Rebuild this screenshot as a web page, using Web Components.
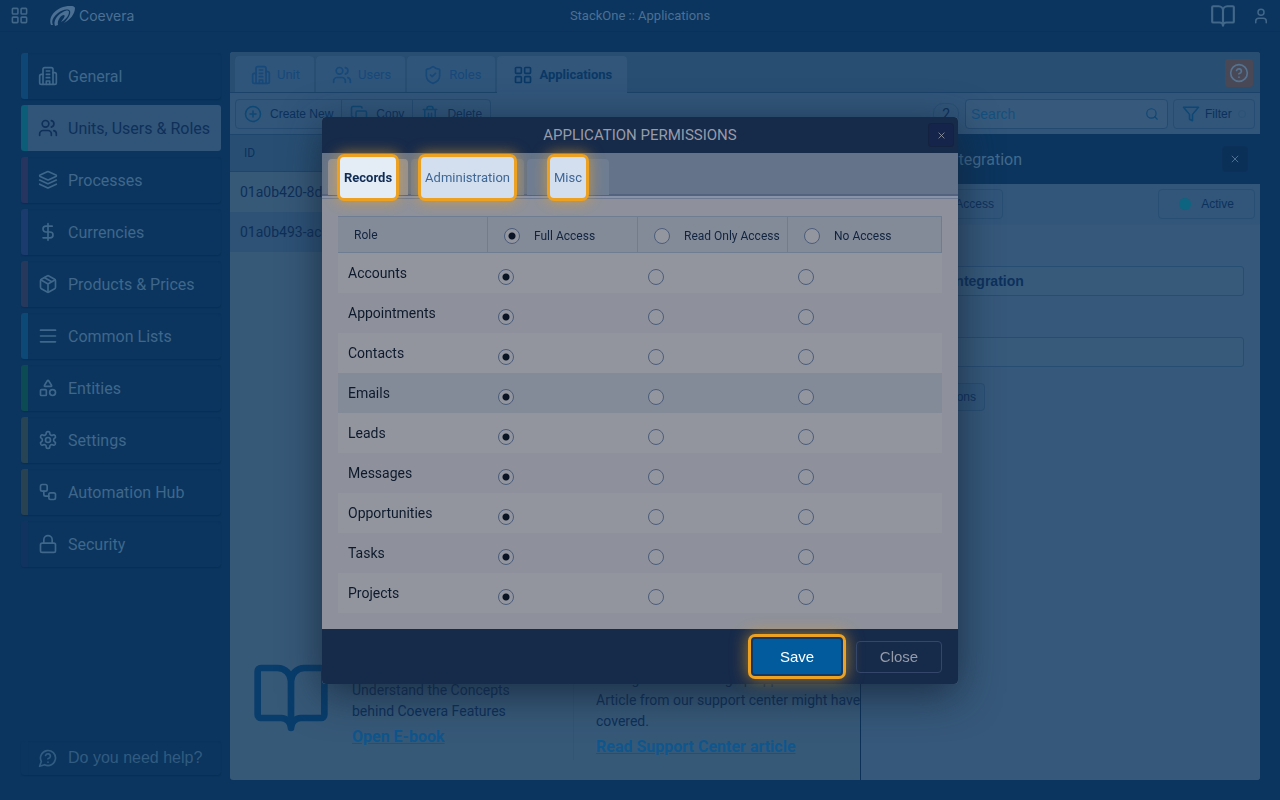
<!DOCTYPE html>
<html lang="en">
<head>
<meta charset="utf-8">
<title>StackOne :: Applications</title>
<style>
  html, body { height: 100%; margin: 0; }
  body {
    background: #0b355e;
    color: #0d2f58;
    font-family: Roboto, "Liberation Sans", sans-serif;
    font-size: 14px;
    overflow: hidden;
  }
</style>
</head>
<body>
<coevera-app></coevera-app>
<permissions-dialog heading="APPLICATION PERMISSIONS"></permissions-dialog>

<script>
const ICONS = {
  grid: '<rect x="3" y="3" width="7" height="7" rx="1"/><rect x="14" y="3" width="7" height="7" rx="1"/><rect x="14" y="14" width="7" height="7" rx="1"/><rect x="3" y="14" width="7" height="7" rx="1"/>',
  building: '<path d="M6 22V4a2 2 0 0 1 2-2h8a2 2 0 0 1 2 2v18Z"/><path d="M6 10H4a2 2 0 0 0-2 2v8a2 2 0 0 0 2 2h2M18 8h2a2 2 0 0 1 2 2v10a2 2 0 0 1-2 2h-2"/><path d="M10 6h4M10 10h4M10 14h4M10 22v-4h4v4"/>',
  users: '<path d="M16 21v-2a4 4 0 0 0-4-4H6a4 4 0 0 0-4 4v2"/><circle cx="9" cy="7" r="4"/><path d="M22 21v-2a4 4 0 0 0-3-3.900M16 3.100a4 4 0 0 1 0 7.800"/>',
  layers: '<path d="m12.800 2.200a2 2 0 0 0-1.700 0L2.600 6.100a1 1 0 0 0 0 1.800l8.600 3.900a2 2 0 0 0 1.700 0l8.600-3.900a1 1 0 0 0 0-1.800Z"/><path d="m22 12-9.200 4.200a2 2 0 0 1-1.700 0L2 12"/><path d="m22 17-9.200 4.200a2 2 0 0 1-1.700 0L2 17"/>',
  dollar: '<path d="M12 2v20M17 5H9.500a3.500 3.500 0 0 0 0 7h5a3.500 3.500 0 0 1 0 7H6"/>',
  box: '<path d="M11 21.700a2 2 0 0 0 2 0l7-4a2 2 0 0 0 1-1.700V8a2 2 0 0 0-1-1.700l-7-4a2 2 0 0 0-2 0l-7 4A2 2 0 0 0 3 8v8a2 2 0 0 0 1 1.700Z"/><path d="M12 22V12M3.300 7 12 12l8.700-5M7.500 4.300l9 5.100"/>',
  list: '<path d="M3 5h18M3 12h18M3 19h18"/>',
  shapes: '<path d="M8.300 10a.7.7 0 0 1-.6-1.100L11.400 3a.7.7 0 0 1 1.200 0l3.700 5.900a.7.7 0 0 1-.6 1.100Z"/><rect x="3" y="14" width="7" height="7" rx="1"/><circle cx="17.500" cy="17.500" r="3.500"/>',
  settings: '<path d="M12.200 2h-.4a2 2 0 0 0-2 2v.2a2 2 0 0 1-1 1.700l-.4.300a2 2 0 0 1-2 0l-.2-.1a2 2 0 0 0-2.700.7l-.2.400a2 2 0 0 0 .7 2.700l.2.100a2 2 0 0 1 1 1.700v.5a2 2 0 0 1-1 1.800l-.2.100a2 2 0 0 0-.7 2.700l.2.400a2 2 0 0 0 2.700.7l.2-.1a2 2 0 0 1 2 0l.4.300a2 2 0 0 1 1 1.700v.2a2 2 0 0 0 2 2h.4a2 2 0 0 0 2-2v-.2a2 2 0 0 1 1-1.700l.4-.3a2 2 0 0 1 2 0l.2.100a2 2 0 0 0 2.700-.7l.2-.4a2 2 0 0 0-.7-2.700l-.2-.1a2 2 0 0 1-1-1.800v-.5a2 2 0 0 1 1-1.700l.2-.1a2 2 0 0 0 .7-2.700l-.2-.4a2 2 0 0 0-2.700-.7l-.2.100a2 2 0 0 1-2 0l-.4-.3a2 2 0 0 1-1-1.700V4a2 2 0 0 0-2-2z"/><circle cx="12" cy="12" r="3"/>',
  flow: '<rect x="3" y="3" width="8" height="8" rx="2"/><path d="M7 11v4a2 2 0 0 0 2 2h4"/><rect x="13" y="13" width="8" height="8" rx="2"/>',
  lock: '<rect x="3" y="11" width="18" height="11" rx="2"/><path d="M7 11V7a5 5 0 0 1 10 0v4"/>',
  help: '<path d="M7.900 20A9 9 0 1 0 4 16.100L2 22Z"/><path d="M9.100 9a3 3 0 0 1 5.800 1c0 2-3 3-3 3M12 17h.01"/>',
  question: '<circle cx="12" cy="12" r="10"/><path d="M9.100 9a3 3 0 0 1 5.800 1c0 2-3 3-3 3M12 17h.01"/>',
  book: '<path d="M12 7v14M3 18a1 1 0 0 1-1-1V4a1 1 0 0 1 1-1h5a4 4 0 0 1 4 4 4 4 0 0 1 4-4h5a1 1 0 0 1 1 1v13a1 1 0 0 1-1 1h-6a3 3 0 0 0-3 3 3 3 0 0 0-3-3z"/>',
  user: '<circle cx="12" cy="7" r="4"/><path d="M19 21v-2a4 4 0 0 0-4-4H9a4 4 0 0 0-4 4v2"/>',
  shield: '<path d="M20 13c0 5-3.500 7.500-7.700 9a1 1 0 0 1-.6 0C7.500 20.500 4 18 4 13V6a1 1 0 0 1 1-1c2 0 4.500-1.200 6.200-2.700a1.200 1.200 0 0 1 1.600 0C14.500 3.800 17 5 19 5a1 1 0 0 1 1 1z"/><path d="m9 12 2 2 4-4"/>',
  plus: '<circle cx="12" cy="12" r="10"/><path d="M8 12h8M12 8v8"/>',
  copy: '<rect x="8" y="8" width="14" height="14" rx="2"/><path d="M4 16a2 2 0 0 1-2-2V4a2 2 0 0 1 2-2h10a2 2 0 0 1 2 2"/>',
  trash: '<path d="M3 6h18M19 6v14a2 2 0 0 1-2 2H7a2 2 0 0 1-2-2V6M8 6V4a2 2 0 0 1 2-2h4a2 2 0 0 1 2 2v2M10 11v6M14 11v6"/>',
  search: '<circle cx="11" cy="11" r="8"/><path d="m21 21-4.300-4.300"/>',
  filter: '<path d="M22 3H2l8 9.500V19l4 2v-8.500z"/>',
  close: '<path d="M5 5l14 14M19 5 5 19"/>'
};

class AppIcon extends HTMLElement {
  connectedCallback() {
    const size = this.getAttribute('size') || 20;
    this.attachShadow({mode: 'open'}).innerHTML = `
      <style>
        :host { display: inline-flex; flex: none; }
        svg { display: block; fill: none; stroke: currentColor; stroke-width: 2; stroke-linecap: round; stroke-linejoin: round; }
      </style>
      <svg width="${size}" height="${size}" viewBox="0 0 24 24" aria-hidden="true">${ICONS[this.getAttribute('name')]}</svg>
    `;
  }
}

class TopBar extends HTMLElement {
  constructor() {
    super();
    this.attachShadow({mode: 'open'}).innerHTML = `
      <style>
        :host {
          display: grid;
          grid-template-columns: 1fr auto 1fr;
          align-items: center;
          height: 31px;
          border-bottom: 1px solid #0b3158;
          color: #416789;
        }
        .left { display: flex; align-items: center; padding-left: 10px; gap: 21px; }
        .right { display: flex; align-items: center; justify-content: flex-end; gap: 16px; padding-right: 10px; }
        button { display: flex; padding: 0; border: 0; background: none; color: inherit; }
        .brand { display: flex; align-items: center; gap: 4px; color: #4b7094; font: 14px Inter, sans-serif; text-decoration: none; }
        .title { font-size: 13px; color: #4b7094; }
      </style>
      <div class="left">
        <button aria-label="Apps"><app-icon name="grid" size="19"></app-icon></button>
        <a class="brand" href="#">
          <svg width="25" height="20" viewBox="0 0 25 20" fill="currentColor" aria-hidden="true">
            <path d="M1 19C-2 12 4 4 13 1 18-.5 24-1 25 2 25 8 20 14 14 17 18 13 21 8 20 5 18 2 12 4 8 7 3 11 1 15 3 19Z"/>
            <path d="M5 20C3 15 7 9 13 6 16 4 19 4 19 6 19 10 15 14 11 16 13 13 16 10 14 9 11 9 7 14 8 19Z"/>
          </svg>
          <span>Coevera</span>
        </a>
      </div>
      <div class="title">StackOne :: Applications</div>
      <div class="right">
        <button aria-label="Guide"><app-icon name="book" size="26"></app-icon></button>
        <button aria-label="Account"><app-icon name="user" size="18"></app-icon></button>
      </div>
    `;
  }
}

class NavItem extends HTMLElement {
  connectedCallback() {
    const bar = this.getAttribute('bar') || 'transparent';
    this.attachShadow({mode: 'open'}).innerHTML = `
      <style>
        :host { display: block; }
        a {
          display: flex;
          align-items: center;
          gap: 10px;
          box-sizing: border-box;
          height: 46px;
          padding-left: 10px;
          border-left: 7px solid ${bar};
          border-radius: 3px;
          box-shadow: 0 1px 1px #092e55, inset 0 1px 1px #0a325a;
          color: #3f678b;
          font-size: 16px;
          white-space: nowrap;
          text-decoration: none;
        }
        :host([active]) a { background: #315579; color: #0e3059; box-shadow: none; }
        :host([compact]) a { height: 34px; font-family: "Liberation Sans", sans-serif; color: #315b80; }
      </style>
      <a href="#"><app-icon name="${this.getAttribute('icon')}"></app-icon><span><slot></slot></span></a>
    `;
  }
}

class SideNav extends HTMLElement {
  constructor() {
    super();
    this.attachShadow({mode: 'open'}).innerHTML = `
      <style>
        :host { display: flex; flex-direction: column; justify-content: space-between; box-sizing: border-box; width: 200px; padding: 1px 0 5px; }
        nav { display: flex; flex-direction: column; gap: 6px; }
      </style>
      <nav>
        <nav-item icon="building" bar="#0e4676">General</nav-item>
        <nav-item icon="users" bar="#0c5d77" active>Units, Users &amp; Roles</nav-item>
        <nav-item icon="layers" bar="#25355f">Processes</nav-item>
        <nav-item icon="dollar" bar="#1b3a6e">Currencies</nav-item>
        <nav-item icon="box" bar="#27385d">Products &amp; Prices</nav-item>
        <nav-item icon="list" bar="#0c4976">Common Lists</nav-item>
        <nav-item icon="shapes" bar="#0d4b54">Entities</nav-item>
        <nav-item icon="settings" bar="#264454">Settings</nav-item>
        <nav-item icon="flow" bar="#294251">Automation Hub</nav-item>
        <nav-item icon="lock" bar="#10345f">Security</nav-item>
      </nav>
      <nav-item icon="help" compact>Do you need help?</nav-item>
    `;
  }
}

class UnitTabs extends HTMLElement {
  constructor() {
    super();
    this.attachShadow({mode: 'open'}).innerHTML = `
      <style>
        :host {
          display: flex;
          justify-content: space-between;
          height: 41px;
          padding: 0 7px 0 5px;
          background: #284e72;
          box-shadow: inset 0 -1px #1b4369;
        }
        .tabs { display: flex; align-items: flex-end; gap: 1px; }
        .tabs button {
          display: flex;
          align-items: center;
          gap: 6px;
          height: 37px;
          padding: 0 15px 0 16px;
          border: 0;
          border-radius: 4px 4px 0 0;
          background: #2f557a;
          box-shadow: inset 0 -1px #1b4369, inset -1px 0 #284e72;
          color: #16487a;
          font: 13px Roboto, sans-serif;
        }
        .tabs .active { background: #31567a; box-shadow: none; color: #0a3866; font-weight: 700; }
        .help {
          display: flex;
          align-self: center;
          padding: 4px;
          border: 0;
          border-radius: 3px;
          background: #494856;
          color: #557390;
        }
      </style>
      <div class="tabs" role="tablist">
        <button role="tab"><app-icon name="building"></app-icon>Unit</button>
        <button role="tab"><app-icon name="users"></app-icon>Users</button>
        <button role="tab"><app-icon name="shield"></app-icon>Roles</button>
        <button role="tab" class="active" aria-selected="true"><app-icon name="grid"></app-icon>Applications</button>
      </div>
      <button class="help" aria-label="Help"><app-icon name="question"></app-icon></button>
    `;
  }
}

class UnitToolbar extends HTMLElement {
  constructor() {
    super();
    this.attachShadow({mode: 'open'}).innerHTML = `
      <style>
        :host {
          display: flex;
          align-items: center;
          justify-content: space-between;
          box-sizing: border-box;
          height: 41px;
          padding: 0 5px;
          background: #31567a;
        }
        button { font: 12px "Liberation Sans", sans-serif; color: #0c315d; background: none; }
        app-icon { color: #0d4775; }
        .actions, .find { display: flex; align-items: center; }
        .actions { border: 1px solid #244b71; border-radius: 4px; }
        .actions button {
          display: flex;
          align-items: center;
          gap: 8px;
          height: 28px;
          padding: 0 8px;
          border: 0;
          border-right: 1px solid #244b71;
        }
        .actions button:last-child { border-right: 0; }
        .count {
          padding: 2px 8px;
          margin-right: 6px;
          border: 1px solid #284f75;
          border-radius: 10px;
          font-size: 14px;
        }
        .search {
          display: flex;
          align-items: center;
          box-sizing: border-box;
          width: 203px;
          height: 30px;
          padding: 0 8px 0 5px;
          margin-right: 5px;
          border: 1px solid #234b71;
          border-radius: 4px;
          background: #375a7c;
        }
        input { flex: 1; min-width: 0; padding: 0; border: 0; background: none; color: #0c315d; font: 14px "Liberation Sans", sans-serif; }
        input::placeholder { color: #14507e; opacity: 1; }
        .filter { display: flex; align-items: center; gap: 5px; height: 30px; width: 82px; padding: 0 8px; border: 1px solid #254c72; border-radius: 4px; }
        .filter i { width: 6px; height: 6px; margin-left: auto; border: 1px solid #2c5277; border-radius: 50%; }
      </style>
      <div class="actions">
        <button><app-icon name="plus" size="18"></app-icon>Create New</button>
        <button><app-icon name="copy" size="18"></app-icon>Copy</button>
        <button><app-icon name="trash" size="18"></app-icon>Delete</button>
      </div>
      <div class="find">
        <span class="count">2</span>
        <label class="search"><input type="text" placeholder="Search" aria-label="Search"><app-icon name="search" size="14"></app-icon></label>
        <button class="filter"><app-icon name="filter" size="18"></app-icon>Filter<i></i></button>
      </div>
    `;
  }
}

class ApplicationList extends HTMLElement {
  constructor() {
    super();
    this.attachShadow({mode: 'open'}).innerHTML = `
      <style>
        :host { display: flex; flex-direction: column; justify-content: space-between; min-width: 0; overflow: hidden; border-right: 1px solid #0b3158; }
        table { width: 100%; border-collapse: collapse; text-align: left; }
        th { height: 36px; padding: 0 14px; border: 1px solid #1d466c; border-width: 1px 0; background: #284f73; color: #0c315d; font-size: 12px; font-weight: 400; }
        td { height: 40px; padding: 0 10px; }
        tr:last-child td { background: #2d5276; }
        .promos { display: flex; box-sizing: border-box; height: 150px; padding: 0 0 20px 21px; line-height: 21px; }
        .promo { display: flex; flex: none; box-sizing: border-box; gap: 21px; }
        .promo app-icon { color: #083d6c; }
        .text { display: flex; flex-direction: column; align-items: flex-start; white-space: nowrap; }
        .book { width: 323px; padding-top: 28px; border-right: 1px solid #30557a; }
        .book .text { padding-top: 22px; }
        .article { padding: 39px 0 0 22px; }
        a { margin-top: 4px; color: #0f568d; font-size: 16px; font-weight: 700; }
      </style>
      <table>
        <thead><tr><th>ID</th></tr></thead>
        <tbody>
          <tr><td>01a0b420-8d</td></tr>
          <tr><td>01a0b493-ac</td></tr>
        </tbody>
      </table>
      <div class="promos">
        <div class="promo book">
          <app-icon name="book" size="80"></app-icon>
          <div class="text"><span>Understand the Concepts</span><span>behind Coevera Features</span><a href="#">Open E-book</a></div>
        </div>
        <div class="promo article">
          <div class="text"><span>Having trouble setting up application? An</span><span>Article from our support center might have</span><span>covered.</span><a href="#">Read Support Center article</a></div>
        </div>
      </div>
    `;
  }
}

class ApplicationDetails extends HTMLElement {
  constructor() {
    super();
    this.attachShadow({mode: 'open'}).innerHTML = `
      <style>
        :host { display: block; background: #36587a; }
        header { display: flex; align-items: center; justify-content: space-between; height: 50px; padding: 0 12px; background: #0b355e; color: #426a8d; font-size: 16px; }
        button { font: 12px "Liberation Sans", sans-serif; color: #0c315d; background: #31567a; border: 1px solid #284e73; border-radius: 4px; height: 30px; padding: 0 8px; }
        header button { display: flex; align-items: center; justify-content: center; width: 26px; height: 26px; padding: 0; border-color: #0b3159; background: #0a3058; color: #5c7e9d; }
        .bar { display: flex; justify-content: space-between; padding: 5px 5px 5px 12px; border-bottom: 1px solid #335679; background: #31567a; }
        .bar button:first-child { width: 130px; text-align: right; }
        .state { display: flex; align-items: center; justify-content: center; gap: 10px; width: 97px; }
        .state i { width: 12px; height: 12px; border-radius: 50%; background: #0c6480; }
        form { display: flex; flex-direction: column; align-items: flex-start; padding: 41px 16px 0 12px; }
        input { box-sizing: border-box; width: 100%; height: 30px; margin: 0 0 41px; padding: 0 9px; border: 1px solid #264d72; border-radius: 3px; background: #375a7b; color: #0c315d; font: 700 14px "Liberation Sans", sans-serif; }
        input + input { margin-bottom: 16px; }
        form button { width: 112px; height: 28px; text-align: right; }
      </style>
      <header><span>StackOne Integration</span><button aria-label="Close details"><app-icon name="close" size="10"></app-icon></button></header>
      <div class="bar"><button>Access</button><button class="state"><i></i>Active</button></div>
      <form>
        <input type="text" value="StackOne Integration" aria-label="Name">
        <input type="text" aria-label="Description">
        <button type="button">Permissions</button>
      </form>
    `;
  }
}

class CoeveraApp extends HTMLElement {
  constructor() {
    super();
    this.attachShadow({mode: 'open'}).innerHTML = `
      <style>
        :host { display: flex; flex-direction: column; height: 100vh; }
        main { flex: 1; display: flex; gap: 9px; padding: 20px 20px 20px 21px; min-height: 0; }
        .panel { flex: 1; min-width: 0; display: flex; flex-direction: column; overflow: hidden; border-radius: 3px; background: #375978; }
        .split { flex: 1; min-height: 0; display: grid; grid-template-columns: minmax(0, 631fr) minmax(0, 399fr); }
      </style>
      <top-bar></top-bar>
      <main>
        <side-nav></side-nav>
        <div class="panel">
          <unit-tabs></unit-tabs>
          <unit-toolbar></unit-toolbar>
          <div class="split">
            <application-list></application-list>
            <application-details></application-details>
          </div>
        </div>
      </main>
    `;
  }
}

class PermissionsTable extends HTMLElement {
  constructor() {
    super();
    const levels = ['Full Access', 'Read Only Access', 'No Access'];
    const roles = ['Accounts', 'Appointments', 'Contacts', 'Emails', 'Leads', 'Messages', 'Opportunities', 'Tasks', 'Projects'];
    this.attachShadow({mode: 'open'}).innerHTML = `
      <style>
        :host { display: block; }
        table { width: 100%; table-layout: fixed; border-collapse: separate; border-spacing: 0; text-align: left; color: #0d1a2c; }
        col { width: 150px; }
        col:last-child { width: auto; }
        th, td { box-sizing: border-box; font-weight: 400; }
        thead th {
          height: 37px;
          padding: 0 0 0 16px;
          border: 1px solid #6f7d93;
          border-left-width: 0;
          background: #848b98;
          color: #10233f;
          font-size: 12px;
          white-space: nowrap;
        }
        thead label { display: flex; align-items: center; gap: 14px; padding-top: 3px; }
        tbody th { height: 40px; padding: 0 10px; font-size: 14px; }
        td { padding: 8px 0 0 10px; }
        tbody tr:nth-child(odd) { background: #93959e; }
        tbody tr.hover { background: #848b98; }
        input {
          appearance: none;
          display: block;
          flex: none;
          box-sizing: border-box;
          width: 16px;
          height: 16px;
          margin: 0;
          border: 1px solid #4b5d7b;
          border-radius: 50%;
          background: #94969f;
        }
        input:checked { background: radial-gradient(circle, #0a1424 3px, #94969f 4px); }
      </style>
      <table>
        <colgroup><col><col><col><col></colgroup>
        <thead>
          <tr>
            <th>Role</th>
            ${levels.map((level, i) => `<th><label><input type="radio" name="all" ${i ? '' : 'checked'}>${level}</label></th>`).join('')}
          </tr>
        </thead>
        <tbody>
          ${roles.map(role => `
            <tr class="${role === 'Emails' ? 'hover' : ''}">
              <th scope="row">${role}</th>
              ${levels.map((level, i) => `<td><input type="radio" name="${role}" aria-label="${role}: ${level}" ${i ? '' : 'checked'}></td>`).join('')}
            </tr>`).join('')}
        </tbody>
      </table>
    `;
  }
}

class PermissionsDialog extends HTMLElement {
  connectedCallback() {
    this.attachShadow({mode: 'open'}).innerHTML = `
      <style>
        :host { position: fixed; inset: 0; display: flex; align-items: center; justify-content: center; padding-top: 1px; }
        .dialog { width: 636px; border-radius: 4px; background: #8e919b; box-shadow: 0 10px 40px rgba(20, 35, 55, .8); }
        header, footer { background: #162a4a; }
        header {
          display: grid;
          grid-template-columns: 26px 1fr 26px;
          align-items: center;
          height: 36px;
          padding: 0 4px;
          border-radius: 4px 4px 0 0;
          color: #989ca8;
        }
        h2 { grid-column: 2; margin: 0; text-align: center; font-size: 15px; font-weight: 400; }
        header button { display: flex; align-items: center; justify-content: center; height: 24px; padding: 0; border: 1px solid #13233f; border-radius: 3px; background: #14244a; color: #a0a4af; }
        .tabs {
          display: flex;
          align-items: flex-end;
          gap: 3px;
          height: 42px;
          padding: 0 6px 3px;
          background: linear-gradient(#647389 41px, #53637f 41px, #53637f 43px, #8892a9 43px);
          border-bottom: 1px solid #6c7990;
        }
        .tabs button {
          display: flex;
          align-items: center;
          justify-content: center;
          height: 36px;
          padding: 0 12px;
          border: 0;
          border-radius: 4px 4px 0 0;
          background: #6f7d92;
          color: #3f6796;
          font: 13px Roboto, sans-serif;
        }
        .tabs .wide { padding: 0 10px; }
        .tabs .narrow { padding: 0 23px; }
        .tabs .active { background: #8e919b; color: #0f2c54; font-weight: 700; }
        .focus { padding: 0 4px; border-radius: 4px; background: #d3dfee; line-height: 41px; box-shadow: 0 0 0 3px #eca122, 0 0 14px 4px rgba(236, 161, 34, .6); }
        .active .focus { background: #e4ecf5; }
        .body { padding: 17px 16px 16px; }
        footer { display: flex; align-items: center; justify-content: flex-end; gap: 13px; height: 55px; padding: 0 16px; border-radius: 0 0 4px 4px; }
        footer button { box-sizing: border-box; height: 32px; width: 86px; padding: 0; border: 1px solid #34476a; border-radius: 4px; background: none; color: #959aa8; font: 15px "Liberation Sans", sans-serif; }
        footer .save { width: 92px; height: 39px; border: 2px solid #153861; background: #015b9d; color: #fff; box-shadow: 0 0 0 3px #eca122, 0 0 16px 4px rgba(236, 161, 34, .6); }
      </style>
      <div class="dialog" role="dialog" aria-modal="true" aria-labelledby="heading">
        <header>
          <h2 id="heading">${this.getAttribute('heading')}</h2>
          <button aria-label="Close dialog"><app-icon name="close" size="9"></app-icon></button>
        </header>
        <div class="tabs" role="tablist">
          <button role="tab" class="active" aria-selected="true"><span class="focus">Records</span></button>
          <button role="tab" class="wide"><span class="focus">Administration</span></button>
          <button role="tab" class="narrow"><span class="focus">Misc</span></button>
        </div>
        <div class="body"><permissions-table></permissions-table></div>
        <footer>
          <button class="save">Save</button>
          <button>Close</button>
        </footer>
      </div>
    `;
  }
}

customElements.define('app-icon', AppIcon);
customElements.define('top-bar', TopBar);
customElements.define('nav-item', NavItem);
customElements.define('side-nav', SideNav);
customElements.define('unit-tabs', UnitTabs);
customElements.define('unit-toolbar', UnitToolbar);
customElements.define('application-list', ApplicationList);
customElements.define('application-details', ApplicationDetails);
customElements.define('coevera-app', CoeveraApp);
customElements.define('permissions-table', PermissionsTable);
customElements.define('permissions-dialog', PermissionsDialog);
</script>
</body>
</html>
